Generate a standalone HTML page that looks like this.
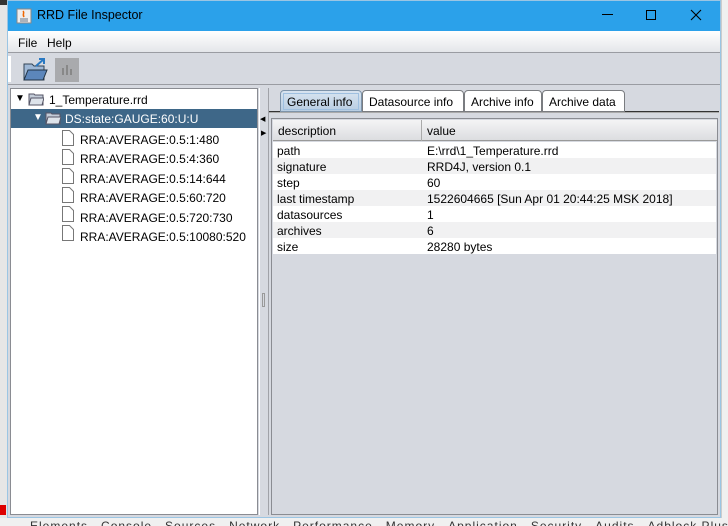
<html style="overflow:hidden"><head><style>
html,body{overflow:hidden}
body{margin:0;width:728px;height:526px;background:#d8d8d8;position:relative;overflow:hidden;font-family:"Liberation Sans",sans-serif;font-size:12px;color:#000}
div{position:absolute;box-sizing:border-box}
.t{white-space:nowrap}
</style></head><body>
<div style="left:0;top:0;width:7px;height:526px;background:#e6e6e6"></div>
<div style="left:0;top:0;width:7px;height:5px;background:#333"></div>
<div style="left:0;top:505px;width:6px;height:10px;background:#d00"></div>
<div style="left:721px;top:0;width:7px;height:526px;background:#f0f0f0;border-left:1px solid #ccc"></div>
<div style="left:0;top:518px;width:728px;height:8px;background:#f0f0f0;overflow:hidden">
<div class="t" style="left:30px;top:1px;font-size:12px;color:#333;letter-spacing:1px">Elements&nbsp;&nbsp;&nbsp;Console&nbsp;&nbsp;&nbsp;Sources&nbsp;&nbsp;&nbsp;Network&nbsp;&nbsp;&nbsp;Performance&nbsp;&nbsp;&nbsp;Memory&nbsp;&nbsp;&nbsp;Application&nbsp;&nbsp;&nbsp;Security&nbsp;&nbsp;&nbsp;Audits&nbsp;&nbsp;&nbsp;Adblock Plus</div></div>
<!-- window -->
<div style="left:7px;top:0;width:714px;height:518px;background:#d6d9e0;border:1px solid #9bc5e3"></div>
<div style="left:8px;top:1px;width:712px;height:30px;background:#2ba1ea"></div>
<svg style="position:absolute;left:16px;top:8px" width="16" height="16"><rect x="1" y="1" width="14" height="14" fill="#eee" stroke="#888"/><path d="M4 11h8M4 13h8" stroke="#678" /><path d="M7 3c2 2-1 3 1 6" stroke="#e60" fill="none" stroke-width="1.5"/></svg>
<div class="t" style="left:37px;top:8px;font-size:12.5px">RRD File Inspector</div>
<div style="left:602px;top:14px;width:11px;height:1px;background:#000"></div>
<div style="left:646px;top:10px;width:10px;height:10px;border:1px solid #000"></div>
<svg style="position:absolute;left:690px;top:9px" width="12" height="12"><path d="M1 1L11 11M11 1L1 11" stroke="#000" stroke-width="1.1"/></svg>
<div style="left:8px;top:31px;width:712px;height:22px;background:linear-gradient(#fff,#e4e6ea);border-bottom:1px solid #9a9ca2"></div>
<div class="t" style="left:18px;top:36px">File</div>
<div class="t" style="left:47px;top:36px">Help</div>
<div style="left:8px;top:84px;width:712px;height:1px;background:#9a9ca2"></div>
<div style="left:8px;top:56px;width:3px;height:26px;background:#fff"></div>
<svg style="position:absolute;left:22px;top:57px" width="26" height="26"><path d="M2 7h8l2 2h10v14H2z" fill="#9fb8d6" stroke="#345"/><path d="M2 23l4-10h19l-4 10z" fill="#5c86bb" stroke="#234"/><path d="M14 9l8-7M17 2h5v5" stroke="#2a79c2" stroke-width="2" fill="none"/></svg>
<div style="left:55px;top:58px;width:24px;height:24px;background:#a9aaad"></div>
<div style="left:62px;top:68px;width:2px;height:7px;background:#888"></div>
<div style="left:66px;top:65px;width:2px;height:10px;background:#888"></div>
<div style="left:70px;top:69px;width:2px;height:6px;background:#888"></div>
<!-- left tree -->
<div style="left:10px;top:88px;width:248px;height:427px;background:#fff;border:1px solid #8a8c92"></div>
<div style="left:11px;top:109px;width:246px;height:19px;background:#3e6788"></div>
<div class="t" style="left:15px;top:93px;font-size:10px">▼</div>
<svg style="position:absolute;left:28px;top:92px" width="16" height="14"><path d="M1 2h5l1 1h8v10H1z" fill="#c3ccd8" stroke="#556"/><path d="M1 13l2-7h13l-2 7z" fill="#dde3ea" stroke="#556"/></svg>
<div class="t" style="left:49px;top:93px">1_Temperature.rrd</div>
<div class="t" style="left:33px;top:112px;font-size:10px;color:#fff">▼</div>
<svg style="position:absolute;left:45px;top:111px" width="16" height="14"><path d="M1 2h5l1 1h8v10H1z" fill="#c3ccd8" stroke="#556"/><path d="M1 13l2-7h13l-2 7z" fill="#dde3ea" stroke="#556"/></svg>
<div class="t" style="left:65px;top:112px;color:#fff">DS:state:GAUGE:60:U:U</div>
<svg style="position:absolute;left:61px;top:130px" width="14" height="112">
<g fill="#fff" stroke="#777"><path d="M1.5 .5h7l4 4v11h-11z"/><path d="M1.5 19.5h7l4 4v11h-11z"/><path d="M1.5 38.5h7l4 4v11h-11z"/><path d="M1.5 57.5h7l4 4v11h-11z"/><path d="M1.5 76.5h7l4 4v11h-11z"/><path d="M1.5 95.5h7l4 4v11h-11z"/></g></svg>
<div class="t" style="left:80px;top:131px;line-height:19.4px">RRA:AVERAGE:0.5:1:480<br>RRA:AVERAGE:0.5:4:360<br>RRA:AVERAGE:0.5:14:644<br>RRA:AVERAGE:0.5:60:720<br>RRA:AVERAGE:0.5:720:730<br>RRA:AVERAGE:0.5:10080:520</div>
<!-- divider -->
<div style="left:259px;top:88px;width:10px;height:427px;border-left:1px solid #fff;border-right:1px solid #a0a2a8"></div>
<div class="t" style="left:260px;top:115px;font-size:7px">◀</div>
<div class="t" style="left:261px;top:129px;font-size:7px">▶</div>
<div style="left:262px;top:293px;width:3px;height:14px;border:1px solid #999"></div>
<!-- tabs -->
<div style="left:269px;top:111px;width:450px;height:2px;border-top:1px solid #333;border-bottom:1px solid #aaa"></div>
<div style="left:280px;top:90px;width:82px;height:22px;background:linear-gradient(#d8e4f0,#b8cde2);border:1px solid #7e94aa;border-radius:4px 4px 0 0"></div>
<div style="left:283px;top:93px;width:76px;height:17px;border:1px solid #9fc0e0"></div>
<div class="t" style="left:287px;top:95px">General info</div>
<div style="left:362px;top:90px;width:102px;height:22px;background:#fff;border:1px solid #7a7c80;border-radius:4px 4px 0 0"></div>
<div class="t" style="left:369px;top:95px">Datasource info</div>
<div style="left:464px;top:90px;width:78px;height:22px;background:#fff;border:1px solid #7a7c80;border-radius:4px 4px 0 0"></div>
<div class="t" style="left:471px;top:95px">Archive info</div>
<div style="left:542px;top:90px;width:83px;height:22px;background:#fff;border:1px solid #7a7c80;border-radius:4px 4px 0 0"></div>
<div class="t" style="left:549px;top:95px">Archive data</div>
<!-- table -->
<div style="left:271px;top:118px;width:447px;height:397px;background:#d6d9e0;border:1px solid #8a8c92"></div>
<div style="left:273px;top:120px;width:444px;height:21px;background:linear-gradient(#f4f4f5,#dcdde0);border-bottom:1px solid #999"></div>
<div style="left:421px;top:120px;width:1px;height:21px;background:#aaa"></div>
<div class="t" style="left:278px;top:124px">description</div>
<div class="t" style="left:427px;top:124px">value</div>
<div style="left:273px;top:142px;width:443px;height:112px;background:repeating-linear-gradient(#fff 0 16px,#f1f1f2 16px 32px)"></div>
<div class="t" style="left:277px;top:143px;line-height:16px">path<br>signature<br>step<br>last timestamp<br>datasources<br>archives<br>size</div>
<div class="t" style="left:427px;top:143px;line-height:16px">E:\rrd\1_Temperature.rrd<br>RRD4J, version 0.1<br>60<br>1522604665 [Sun Apr 01 20:44:25 MSK 2018]<br>1<br>6<br>28280 bytes</div>
</body></html>
